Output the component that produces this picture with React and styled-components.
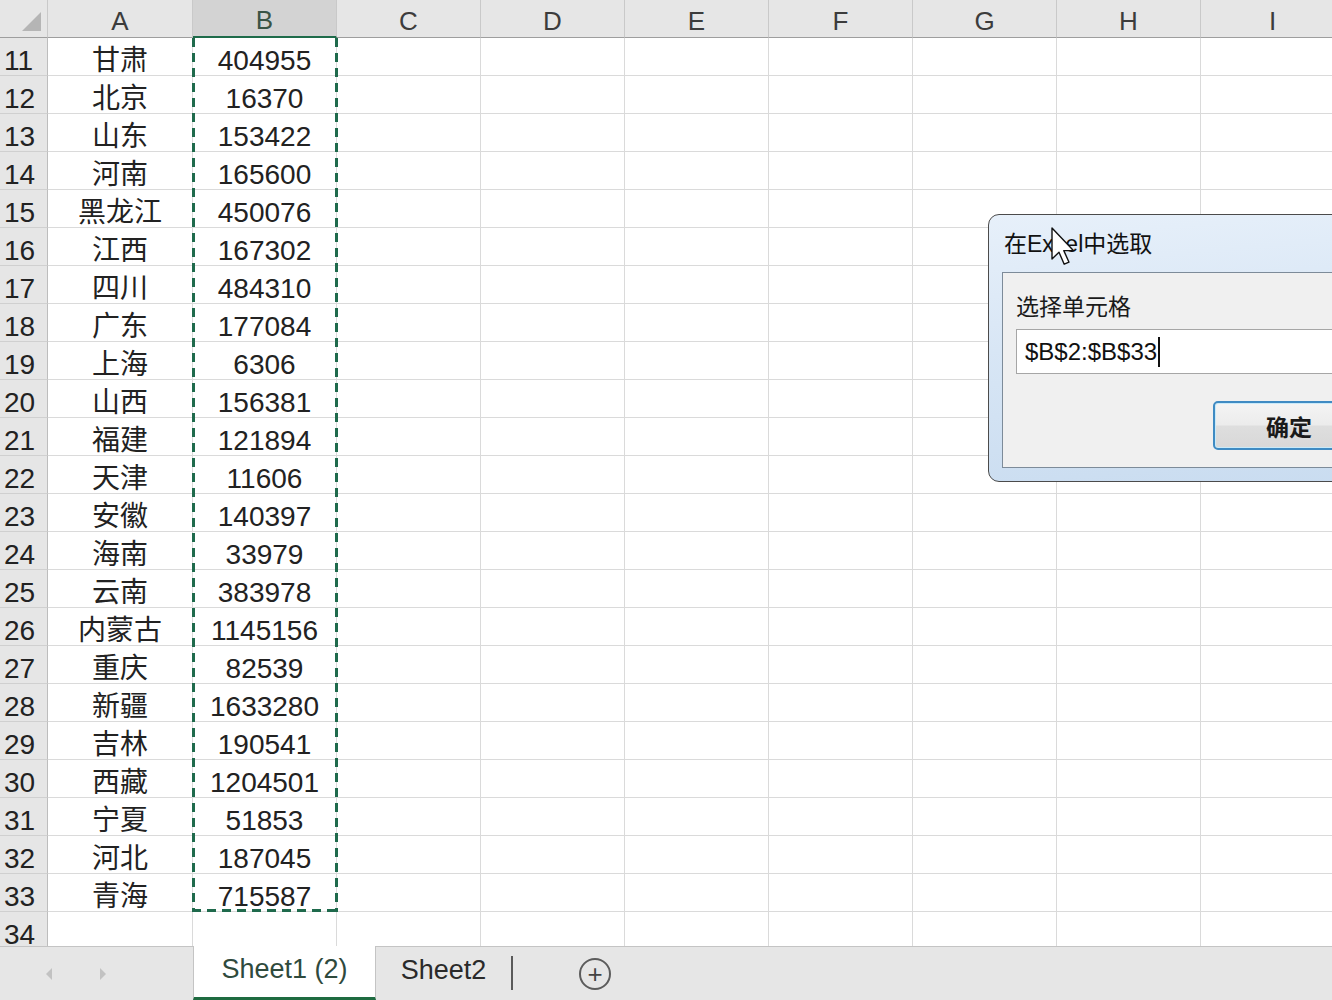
import React from 'react'
import styled, { createGlobalStyle } from 'styled-components'

const GlobalStyle = createGlobalStyle`
  html, body {
    margin: 0;
    padding: 0;
    background: #ffffff;
  }
  body {
    font-family: "Liberation Sans", "Noto Sans CJK SC", sans-serif;
  }
`

const rows = [
  [11, '甘肃', '404955'],
  [12, '北京', '16370'],
  [13, '山东', '153422'],
  [14, '河南', '165600'],
  [15, '黑龙江', '450076'],
  [16, '江西', '167302'],
  [17, '四川', '484310'],
  [18, '广东', '177084'],
  [19, '上海', '6306'],
  [20, '山西', '156381'],
  [21, '福建', '121894'],
  [22, '天津', '11606'],
  [23, '安徽', '140397'],
  [24, '海南', '33979'],
  [25, '云南', '383978'],
  [26, '内蒙古', '1145156'],
  [27, '重庆', '82539'],
  [28, '新疆', '1633280'],
  [29, '吉林', '190541'],
  [30, '西藏', '1204501'],
  [31, '宁夏', '51853'],
  [32, '河北', '187045'],
  [33, '青海', '715587'],
  [34, '', ''],
]

const columns = ['A', 'B', 'C', 'D', 'E', 'F', 'G', 'H', 'I']

const Page = styled.div`
  position: relative;
  width: 1332px;
  height: 1000px;
  overflow: hidden;
  display: flex;
  flex-direction: column;
  background: #fff;
`

const Sheet = styled.div`
  flex: 1;
  overflow: hidden;
  position: relative;
`

const Grid = styled.div`
  display: grid;
  grid-template-columns: 48px 145px repeat(8, 144px);
  grid-auto-rows: 38px;
  width: 1400px;
`

const Corner = styled.div`
  background: #e6e6e6;
  border-right: 1px solid #c9c9c9;
  border-bottom: 1px solid #9e9e9e;
  box-sizing: border-box;
  position: relative;

  &::after {
    content: '';
    position: absolute;
    right: 6px;
    bottom: 6px;
    width: 0;
    height: 0;
    border-left: 19px solid transparent;
    border-bottom: 19px solid #b5b5b5;
  }
`

const ColHeader = styled.div`
  display: flex;
  align-items: center;
  justify-content: center;
  padding-top: 5px;
  box-sizing: border-box;
  font-size: 26px;
  color: ${p => (p.$active ? '#3a5446' : '#3c3c3c')};
  background: ${p => (p.$active ? '#d3d3d3' : '#e6e6e6')};
  border-right: 1px solid #c9c9c9;
  border-bottom: ${p => (p.$active ? '2px solid #1e6b4a' : '1px solid #9e9e9e')};
`

const RowHeader = styled.div`
  display: flex;
  align-items: center;
  padding: 8px 0 0 4px;
  box-sizing: border-box;
  font-size: 28px;
  color: #222;
  background: #e6e6e6;
  border-right: 1px solid #bdbdbd;
  border-bottom: 1px solid #d0d0d0;
`

const Cell = styled.div`
  display: flex;
  align-items: center;
  justify-content: center;
  padding-top: ${p => (p.$cjk ? '3px' : '8px')};
  box-sizing: border-box;
  font-size: 28px;
  color: #222;
  white-space: nowrap;
  border-right: 1px solid #dadada;
  border-bottom: 1px solid #dadada;
`

const dash = '#1f6a4c'

const MarchingAnts = styled.div`
  position: absolute;
  left: 192px;
  top: 38px;
  width: 146px;
  height: 874px;
  pointer-events: none;
  background-image:
    repeating-linear-gradient(to bottom, ${dash} 0 9px, transparent 9px 15px),
    repeating-linear-gradient(to bottom, ${dash} 0 9px, transparent 9px 15px),
    repeating-linear-gradient(to right, ${dash} 0 9px, transparent 9px 15px);
  background-size: 3px 100%, 3px 100%, 100% 3px;
  background-position: left top, right top, left bottom;
  background-repeat: no-repeat;
`

const TabBar = styled.div`
  height: 54px;
  flex-shrink: 0;
  display: flex;
  align-items: stretch;
  background: #e6e6e6;
  border-top: 1px solid #c4c4c4;
  box-sizing: border-box;
  margin-top: -4px;
  position: relative;
  z-index: 1;
`

const NavArrows = styled.div`
  width: 193px;
  display: flex;
  align-items: center;
  gap: 48px;
  padding-left: 46px;
  box-sizing: border-box;
`

const Arrow = styled.span`
  width: 0;
  height: 0;
  border-top: 6px solid transparent;
  border-bottom: 6px solid transparent;
  ${p => (p.$dir === 'left'
    ? 'border-right: 6px solid #c2c2c2;'
    : 'border-left: 6px solid #c2c2c2;')}
`

const Tab = styled.div`
  display: flex;
  align-items: center;
  justify-content: center;
  width: ${p => p.$width}px;
  box-sizing: border-box;
  font-size: 27px;
  padding-bottom: ${p => (p.$active ? '4px' : '6px')};
  color: ${p => (p.$active ? '#2f4a3d' : '#2a2a2a')};
  background: ${p => (p.$active ? '#ffffff' : 'transparent')};
  border-bottom: ${p => (p.$active ? '3px solid #1e6b40' : 'none')};
  margin-top: ${p => (p.$active ? '-1px' : '0')};
  border-left: ${p => (p.$active ? '1px solid #c4c4c4' : 'none')};
  border-right: ${p => (p.$active ? '1px solid #c4c4c4' : 'none')};
`

const Divider = styled.div`
  width: 2px;
  background: #5a5a5a;
  margin: 9px 0 10px;
`

const AddSheet = styled.div`
  margin: 11px 0 0 66px;
  width: 28px;
  height: 28px;
  border: 2px solid #5c5c5c;
  border-radius: 50%;
  display: flex;
  align-items: center;
  justify-content: center;
  color: #444;
  font-size: 26px;
  line-height: 1;
`

const Dialog = styled.div`
  position: absolute;
  left: 988px;
  top: 214px;
  width: 420px;
  height: 268px;
  box-sizing: border-box;
  border: 1.5px solid #4b4b4b;
  border-radius: 11px;
  background: linear-gradient(175deg, #e7f0fa 0%, #d8e6f5 45%, #c9dcf0 100%);
  padding: 0 0 13px 13px;
  display: flex;
  flex-direction: column;
  z-index: 2;
`

const DialogTitle = styled.div`
  height: 57px;
  display: flex;
  align-items: center;
  padding: 0 0 3px 2px;
  box-sizing: border-box;
  font-size: 23px;
  color: #111;
`

const DialogBody = styled.div`
  flex: 1;
  background: #f0f0f0;
  border: 1px solid #7d8b99;
  padding: 17px 0 0 13px;
  display: flex;
  flex-direction: column;
`

const FieldLabel = styled.div`
  font-size: 23px;
  color: #1a1a1a;
  height: 30px;
  display: flex;
  align-items: center;
`

const Input = styled.div`
  margin-top: 9px;
  height: 45px;
  box-sizing: border-box;
  background: #fff;
  border: 1px solid #a6a6a6;
  border-right: none;
  display: flex;
  align-items: center;
  padding-left: 8px;
  font-size: 24px;
  color: #111;
`

const Caret = styled.span`
  display: inline-block;
  width: 2px;
  height: 30px;
  background: #111;
  margin-left: 1px;
`

const ButtonRow = styled.div`
  margin-top: 27px;
  padding-left: 197px;
`

const OkButton = styled.div`
  width: 148px;
  height: 49px;
  box-sizing: border-box;
  border: 2px solid #3f8bc3;
  border-radius: 5px;
  background: linear-gradient(to bottom, #f4f4f4 0%, #ececec 48%, #dedede 52%, #d8d8d8 100%);
  box-shadow: inset 0 0 0 1px #c9eaf9;
  display: flex;
  align-items: center;
  justify-content: center;
  font-size: 23px;
  font-weight: 700;
  color: #1a1a1a;
  padding-left: 4px;
`

const Cursor = styled.svg`
  position: absolute;
  left: 1051px;
  top: 227px;
  z-index: 3;
`

export default function App() {
  return (
    <>
      <GlobalStyle />
      <Page>
        <Sheet>
          <Grid>
            <Corner />
            {columns.map(c => (
              <ColHeader key={c} $active={c === 'B'}>{c}</ColHeader>
            ))}
            {rows.map(([n, name, value]) => (
              <React.Fragment key={n}>
                <RowHeader>{n}</RowHeader>
                <Cell $cjk>{name}</Cell>
                <Cell>{value}</Cell>
                {columns.slice(2).map(c => (
                  <Cell key={c} />
                ))}
              </React.Fragment>
            ))}
          </Grid>
          <MarchingAnts />
        </Sheet>
        <TabBar>
          <NavArrows>
            <Arrow $dir="left" />
            <Arrow $dir="right" />
          </NavArrows>
          <Tab $active $width={183}>Sheet1 (2)</Tab>
          <Tab $width={135}>Sheet2</Tab>
          <Divider />
          <AddSheet>+</AddSheet>
        </TabBar>
        <Dialog>
          <DialogTitle>在Excel中选取</DialogTitle>
          <DialogBody>
            <FieldLabel>选择单元格</FieldLabel>
            <Input>
              $B$2:$B$33<Caret />
            </Input>
            <ButtonRow>
              <OkButton>确定</OkButton>
            </ButtonRow>
          </DialogBody>
        </Dialog>
        <Cursor width="26" height="40" viewBox="0 0 13 20">
          <path
            d="M0.5 0.5 L0.5 16 L4 12.6 L6.6 18.6 L9 17.6 L6.4 11.8 L11.2 11.8 Z"
            fill="#fff"
            stroke="#111"
            strokeWidth="0.7"
            strokeLinejoin="round"
          />
        </Cursor>
      </Page>
    </>
  )
}
